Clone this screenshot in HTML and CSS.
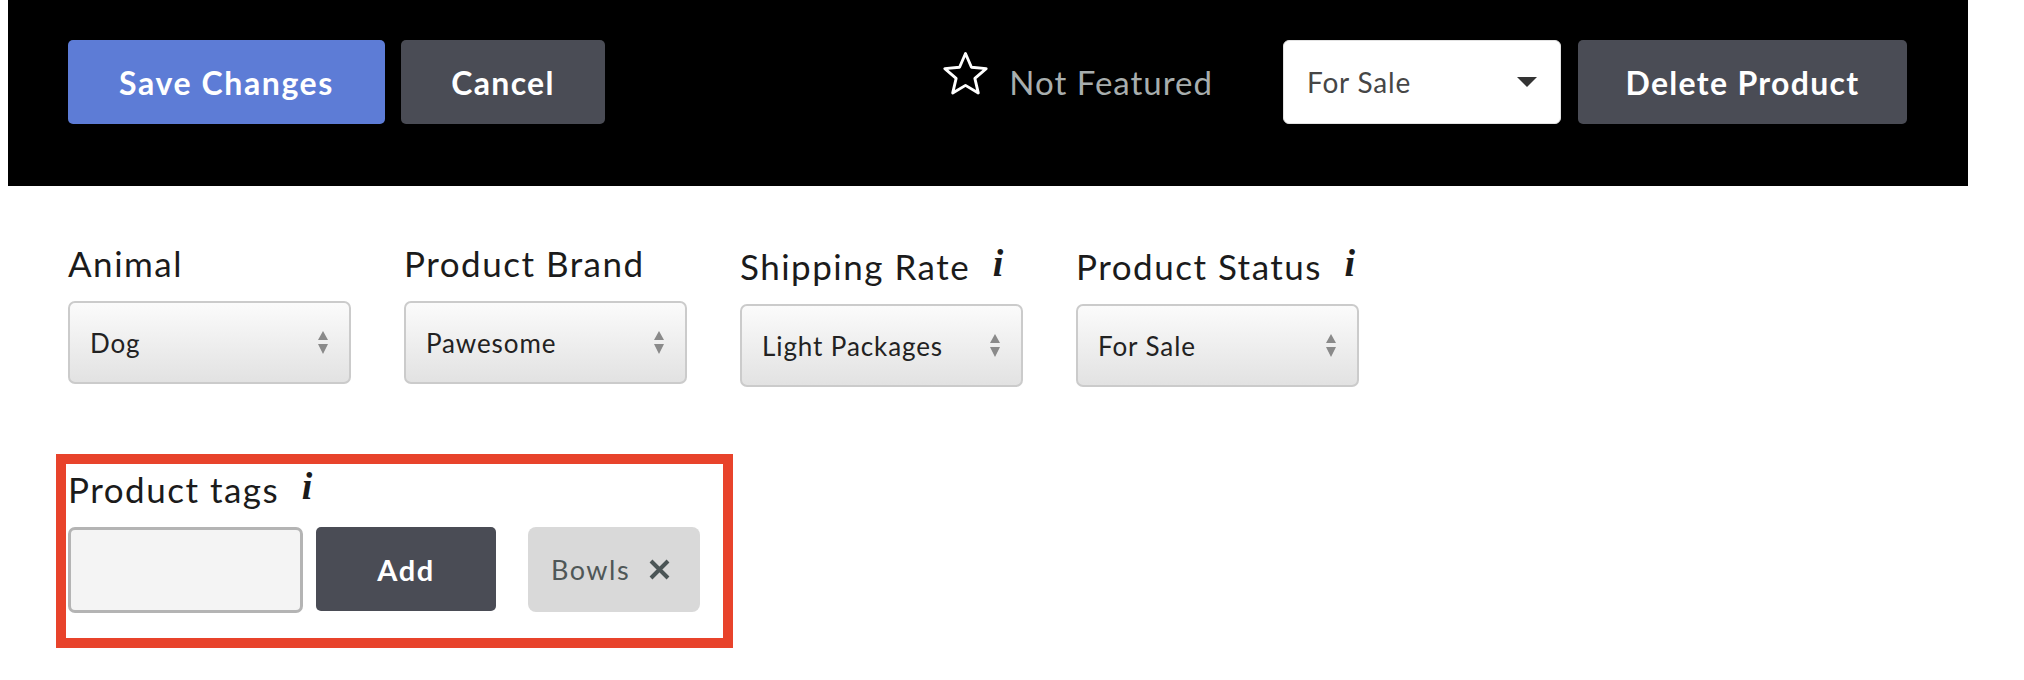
FILE: index.html
```html
<!DOCTYPE html>
<html lang="en">
<head>
    <meta charset="UTF-8">
    <meta name="viewport" content="width=device-width, initial-scale=1.0">
    <title>Edit Product</title>
    <link rel="stylesheet" href="styles.css">
</head>
<body>
    <div class="toolbar">
        <div class="toolbar-group">
            <button class="btn btn-primary btn-save">Save Changes</button>
            <button class="btn btn-dark btn-cancel">Cancel</button>
        </div>
        <div class="toolbar-group">
            <div class="featured">
                <svg class="star" width="47" height="45" viewBox="0 0 26 25">
                    <path d="M13 1.4l3.3 7.6 8.2.8-6.3 5.4 1.9 8.1L13 19.1l-7.1 4.2 1.9-8.1-6.3-5.4 8.2-.8z" fill="none" stroke="#fff" stroke-width="1.6" stroke-linejoin="round"/>
                </svg>
                <span>Not Featured</span>
            </div>
            <div class="status-select">
                <span>For Sale</span>
                <svg width="20" height="10" viewBox="0 0 20 10"><path d="M0 0h20L10 10z" fill="#333"/></svg>
            </div>
            <button class="btn btn-dark btn-delete">Delete Product</button>
        </div>
    </div>

    <div class="content">
        <div class="fields">
            <div class="field">
                <label>Animal</label>
                <div class="select">
                    <span>Dog</span>
                    <svg class="updown" width="10" height="23" viewBox="0 0 10 23"><path d="M5 0l5 9H0z M0 13h10l-5 10z" fill="#8a8a8a"/></svg>
                </div>
            </div>
            <div class="field">
                <label>Product Brand</label>
                <div class="select">
                    <span>Pawesome</span>
                    <svg class="updown" width="10" height="23" viewBox="0 0 10 23"><path d="M5 0l5 9H0z M0 13h10l-5 10z" fill="#8a8a8a"/></svg>
                </div>
            </div>
            <div class="field">
                <label>Shipping Rate <span class="info">i</span></label>
                <div class="select">
                    <span>Light Packages</span>
                    <svg class="updown" width="10" height="23" viewBox="0 0 10 23"><path d="M5 0l5 9H0z M0 13h10l-5 10z" fill="#8a8a8a"/></svg>
                </div>
            </div>
            <div class="field">
                <label>Product Status <span class="info">i</span></label>
                <div class="select">
                    <span>For Sale</span>
                    <svg class="updown" width="10" height="23" viewBox="0 0 10 23"><path d="M5 0l5 9H0z M0 13h10l-5 10z" fill="#8a8a8a"/></svg>
                </div>
            </div>
        </div>

        <div class="tags-box">
            <label>Product tags <span class="info">i</span></label>
            <div class="tags-row">
                <input class="tag-input" type="text">
                <button class="btn btn-dark btn-add">Add</button>
                <div class="tag">
                    <span>Bowls</span>
                    <svg width="23" height="21" viewBox="0 0 23 21"><path d="M3 2l17 17M20 2L3 19" stroke="#4b5556" stroke-width="4"/></svg>
                </div>
            </div>
        </div>
    </div>
</body>
</html>
```

FILE: styles.css
```css
body {
    margin: 0 8px 8px;
    font-family: Lato, "Open Sans", sans-serif;
    color: #1b1b1b;
    background: #fff;
}

.toolbar {
    background: #000;
    height: 186px;
    margin-right: 48px;
    padding: 40px 61px 0 60px;
    box-sizing: border-box;
    display: flex;
    justify-content: space-between;
    align-items: flex-start;
}

.toolbar-group {
    display: flex;
    align-items: center;
}

.btn {
    height: 84px;
    border: none;
    border-radius: 5px;
    color: #fff;
    font-family: inherit;
    font-weight: 700;
    font-size: 32px;
    letter-spacing: 1.3px;
    cursor: pointer;
}

.btn-primary {
    background: #5d7cd6;
}

.btn-dark {
    background: #4a4c55;
}

.btn-save {
    width: 317px;
    margin-right: 16px;
    letter-spacing: 1.6px;
}

.btn-cancel {
    width: 204px;
}

.btn-delete {
    width: 329px;
}

.featured {
    display: flex;
    align-items: center;
    color: #a8aeae;
    font-size: 33px;
    letter-spacing: 1px;
    margin-right: 70px;
}

.featured .star {
    margin: 0 20px 18px 0;
}

.status-select {
    width: 278px;
    height: 84px;
    box-sizing: border-box;
    background: #fff;
    border: 1px solid #e2e2e2;
    border-radius: 6px;
    padding: 0 23px 0 23px;
    display: flex;
    align-items: center;
    justify-content: space-between;
    font-size: 28px;
    letter-spacing: 0.8px;
    color: #464646;
    margin-right: 17px;
}

.content {
    padding: 57px 60px 0;
}

.fields {
    display: flex;
    align-items: flex-start;
    gap: 53px;
}

.field label,
.tags-box label {
    display: block;
    font-size: 35px;
    letter-spacing: 1.5px;
    line-height: 40px;
    margin-bottom: 18px;
}

.info {
    font-family: "Liberation Serif", serif;
    font-style: italic;
    font-weight: 700;
    font-size: 38px;
    letter-spacing: 0;
    vertical-align: 4px;
    margin-left: 12px;
}

.select {
    width: 283px;
    height: 83px;
    box-sizing: border-box;
    border: 2px solid #cbcbcb;
    border-radius: 7px;
    background: linear-gradient(#fbfbfb, #e2e2e2);
    padding: 0 21px 0 20px;
    display: flex;
    align-items: center;
    justify-content: space-between;
    font-size: 26px;
    letter-spacing: 0.9px;
    color: #222;
}

.tags-box {
    display: inline-block;
    margin: 67px 0 0 -12px;
    border: 10px solid #e8432b;
    padding: 2px 23px 25px 2px;
}

.tags-row {
    display: flex;
    align-items: flex-start;
}

.tag-input {
    width: 235px;
    height: 86px;
    box-sizing: border-box;
    border: 3px solid #b4b4b4;
    border-radius: 7px;
    background: #f4f4f4;
    margin: 0 13px 0 0;
}

.btn-add {
    width: 180px;
    font-size: 29px;
    letter-spacing: 1.5px;
    margin-right: 32px;
}

.tag {
    width: 172px;
    height: 85px;
    box-sizing: border-box;
    background: #d9d9d9;
    border-radius: 8px;
    padding: 0 29px 0 23px;
    display: flex;
    align-items: center;
    justify-content: space-between;
    font-size: 27px;
    letter-spacing: 1.5px;
    color: #4f5757;
}
```
